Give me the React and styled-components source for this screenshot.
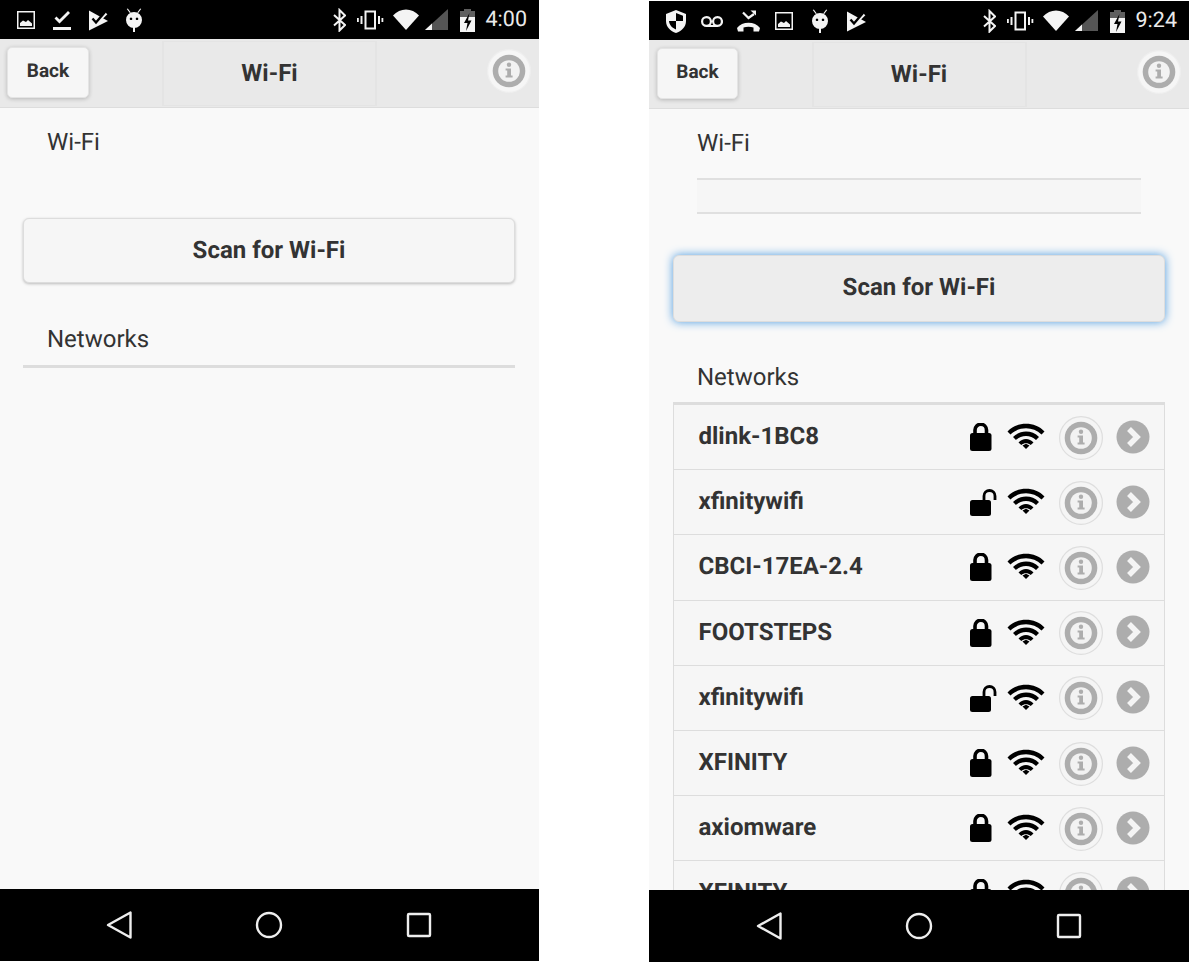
import React from "react";
import styled, { createGlobalStyle, css } from "styled-components";

const Global = createGlobalStyle`
  html, body { margin: 0; padding: 0; background: #fff; }
  body {
    font-family: Roboto, "Liberation Sans", sans-serif;
    overflow: hidden;
    text-rendering: geometricPrecision;
  }
`;

const Page = styled.div`
  display: flex;
  gap: 110px;
  width: 1191px;
  height: 963px;
  align-items: flex-start;
`;
const Phone = styled.div`
  display: flex;
  flex-direction: column;
  flex: none;
  width: ${(p) => p.$w}px;
  height: 961px;
  margin-top: ${(p) => p.$top}px;
  background: #f9f9f9;
`;
const StatusBar = styled.div`
  flex: none;
  height: 39px;
  background: #000;
  display: flex;
  align-items: center;
  color: #eee;
`;
const StatusIcon = styled.svg`
  flex: none;
  margin-left: ${(p) => p.$ml}px;
  width: ${(p) => p.$w}px;
  height: 24px;
  fill: #f4f4f4;
  stroke: none;
`;
const Spacer = styled.div`
  flex: 1;
`;
const Clock = styled.span`
  font-size: 21.5px;
  margin-left: 11px;
  margin-right: 12px;
  color: #eaeaea;
`;
const Header = styled.header`
  flex: none;
  height: 69px;
  box-sizing: border-box;
  position: relative;
  display: flex;
  justify-content: center;
  background: #e9e9e9;
  border-bottom: 1px solid #ddd;
`;
const BackButton = styled.div`
  position: absolute;
  left: ${(p) => p.$left}px;
  top: 8px;
  width: ${(p) => p.$w}px;
  height: 51px;
  padding-bottom: 4px;
  display: flex;
  align-items: center;
  justify-content: center;
  background: #f6f6f6;
  border: 1px solid #e4e4e4;
  border-radius: 5px;
  box-sizing: border-box;
  box-shadow: 0 1px 4px rgba(0, 0, 0, 0.22);
  font-size: 19px;
  font-weight: 700;
  color: #333;
`;
const Title = styled.h1`
  margin: 2px 0 1px;
  padding-bottom: 2px;
  width: 215px;
  box-sizing: border-box;
  border: 2px solid #e4e4e4;
  border-width: 1px 2px;
  display: flex;
  align-items: center;
  justify-content: center;
  font-size: 24px;
  font-weight: 700;
  color: #333;
`;
const HeaderInfo = styled.div`
  position: absolute;
  right: 8px;
  top: 10px;
`;
const Content = styled.main`
  flex: 1;
  min-height: 0;
  overflow: hidden;
  padding: 0 24px 0 ${(p) => p.$pl}px;
  display: flex;
  flex-direction: column;
`;
const FieldLabel = styled.div`
  font-size: 24px;
  line-height: 28px;
  color: #333;
  padding-left: 24px;
  margin-top: ${(p) => p.$mt}px;
`;
const TextField = styled.div`
  flex: none;
  margin: 21px 0 0 24px;
  width: 444px;
  height: 36px;
  box-sizing: border-box;
  background: #f6f6f6;
  border-top: 2px solid #e0e0e0;
  border-bottom: 2px solid #e0e0e0;
`;
const ScanButton = styled.div`
  flex: none;
  height: ${(p) => (p.$focus ? 67 : 65)}px;
  margin-top: ${(p) => p.$mt}px;
  padding-bottom: ${(p) => (p.$focus ? 4 : 2)}px;
  box-sizing: border-box;
  display: flex;
  align-items: center;
  justify-content: center;
  border: 1px solid #ddd;
  border-radius: 6px;
  font-size: 24px;
  font-weight: 700;
  color: #333;
  ${(p) =>
    p.$focus
      ? css`
          background: #ededed;
          box-shadow: 0 0 10px #4c9be0;
        `
      : css`
          background: #f6f6f6;
          box-shadow: 0 1px 3px rgba(0, 0, 0, 0.25);
        `}
`;
const Rule = styled.div`
  flex: none;
  height: 3px;
  margin-top: 12px;
  background: #ddd;
`;
const List = styled.ul`
  list-style: none;
  margin: 11px 0 0;
  padding: 0;
  border-top: 3px solid #ddd;
  border-left: 1px solid #ddd;
  border-right: 1px solid #ddd;
  flex: none;
`;
const Row = styled.li`
  height: 65.2px;
  box-sizing: border-box;
  border-bottom: 1px solid #ddd;
  background: #f6f6f6;
  display: flex;
  align-items: center;
  padding: 0 14px 2px 24.5px;
`;
const Name = styled.span`
  flex: 1;
  font-size: 24px;
  font-weight: 700;
  color: #333;
`;
const LockBox = styled.svg`
  flex: none;
  width: 28px;
  height: 30px;
  margin-right: 9px;
  margin-top: 4px;
`;
const WifiBox = styled.svg`
  flex: none;
  width: 38px;
  height: 28px;
  margin-right: 14px;
`;
const RowInfo = styled.div`
  flex: none;
  display: flex;
  margin-top: 3px;
`;
const Chevron = styled.svg`
  flex: none;
  width: 34px;
  height: 34px;
  margin-left: 13px;
  margin-top: 1px;
`;
const NavBar = styled.nav`
  flex: none;
  height: 72px;
  padding-right: ${(p) => p.$pr}px;
  background: #000;
  display: flex;
  align-items: center;
  justify-content: center;
  gap: 114px;
`;
const NavIcon = styled.svg`
  width: 36px;
  height: 36px;
  fill: none;
  stroke: #eee;
  stroke-width: 2.4;
  stroke-linejoin: round;
`;

const InfoCircle = styled.svg`
  display: block;
  width: 44px;
  height: 44px;
`;

const Info = ({ halo }) => (
  <InfoCircle viewBox="0 0 44 44">
    <circle cx="22" cy="22" r="21.4" fill={halo ? "#f5f5f5" : "#f6f6f6"} stroke={halo ? "#dedede" : "#eeeeee"} strokeWidth="1.2" />
    <circle cx="22" cy="22" r="16.3" fill="#adadad" />
    <circle cx="22" cy="22" r="10.8" fill="#f2f2f2" />
    <circle cx="22" cy="15.8" r="2.2" fill="#adadad" />
    <path d="M18.6 19.4h5.4v7.2h1.6v2h-7v-2h1.6v-5.2h-1.6z" fill="#adadad" />
  </InfoCircle>
);

const Lock = ({ open }) =>
  open ? (
    <LockBox viewBox="0 0 28 30">
      <rect x="0" y="12" width="21" height="16" rx="2.5" fill="#000" />
      <path d="M14 13V8a5.5 5.5 0 0 1 11 0v4" fill="none" stroke="#000" strokeWidth="2.8" />
    </LockBox>
  ) : (
    <LockBox viewBox="0 0 28 30">
      <rect x="0" y="10" width="21.500" height="18" rx="2.5" fill="#000" />
      <path d="M5 12V7a5.750 5.750 0 0 1 11.500 0V12" fill="none" stroke="#000" strokeWidth="3.6" />
    </LockBox>
  );

const Wifi = () => (
  <WifiBox viewBox="0 0 38 28" fill="#000">
    <path d="M0.500 9.500C10-.8 28-.8 37.500 9.500L34.500 12.500C26 4.200 12 4.200 3.500 12.500z" />
    <path d="M6 15C13 7.800 25 7.800 32 15L29 18C23.500 12.500 14.500 12.500 9 18z" />
    <path d="M11.500 20.500C15.500 15.800 22.500 15.800 26.500 20.500L23.700 23C21 20.500 17 20.500 14.300 23z" />
    <path d="M15.500 23.500l3.500-1.800 3.500 1.800-3.500 3.500z" />
  </WifiBox>
);

const Arrow = () => (
  <Chevron viewBox="0 0 34 34">
    <circle cx="17" cy="17" r="16.5" fill="#adadad" />
    <path d="M13 9L21 17L13 25" fill="none" stroke="#f4f4f4" strokeWidth="5.5" />
  </Chevron>
);

const icons = {
  image: (
    <>
      <path fillRule="evenodd" d="M0 3h18v18H0zM1.500 4.500v15h15v-15z" />
      <path d="M3 18v-3l3-2.500 3 1.500 2-2 4 3.500V18z" />
    </>
  ),
  check: (
    <>
      <path d="M0 19h18v3H0z" />
      <path d="M1.500 10.500l2-2 3 3L15 3l2 2L6.500 15.500z" />
    </>
  ),
  play: (
    <>
      <path d="M0 2.500L19 13 0 22.500z" />
      <path d="M9.500 13.500L17.500 5.500" fill="none" stroke="#f4f4f4" strokeWidth="2.400" />
      <path d="M3.500 10.500L7 14.500L15.500 4.500" fill="none" stroke="#000" strokeWidth="2.400" />
    </>
  ),
  android: (
    <>
      <path fillRule="evenodd" d="M8 4a8 8 0 0 1 8 8 8 8 0 0 1-16 0 8 8 0 0 1 8-8zM5 9.500a1.300 1.300 0 1 0 .01 0zM11 9.500a1.300 1.300 0 1 0 .01 0z" />
      <path d="M7 19h2v6H7zM1.800 .5l3 4-1 .6-3-4zM14.200 .5l-3 4 1 .6 3-4z" />
    </>
  ),
  shield: (
    <path fillRule="evenodd" d="M10 1l10 4v7c0 6-4.500 10-10 12C4.500 22 0 18 0 12V5zM10 4v8H3c.3 4 3.300 7 7 8.500V12h7V6.800z" />
  ),
  voicemail: (
    <path fillRule="evenodd" d="M5.500 7a5.500 5.500 0 0 1 4.200 9h2.600a5.500 5.500 0 1 1 4.200 2h-11a5.500 5.500 0 0 1 0-11zM5.500 9.200a3.300 3.300 0 1 0 0 6.600 3.300 3.300 0 0 0 0-6.600zM16.500 9.200a3.300 3.300 0 1 0 0 6.600 3.300 3.300 0 0 0 0-6.600z" />
  ),
  missed: (
    <>
      <path d="M0 19c5-7 18-7 23 0l-1 3.500h-5.500v-4c-3-1-7-1-10 0v4H1z" />
      <path d="M6 3.500l5.500 5.500 5.500-4" fill="none" stroke="#f4f4f4" strokeWidth="2.200" />
      <path d="M13.500 1.500H19v5z" />
    </>
  ),
  bluetooth: (
    <path fill="none" stroke="#f4f4f4" strokeWidth="2" d="M1 7l11 10-5.500 5.500V2L12 7.500 1 17.500" />
  ),
  vibrate: (
    <>
      <path fillRule="evenodd" d="M7.500 2.500h11.500v19H7.500zM9.500 4.500v15h7.500v-15z" />
      <path d="M3.500 8h2v8h-2zM0 10h1.800v4H0zM21 8h2v8h-2zM24.500 10h1.800v4h-1.800z" />
    </>
  ),
  wifi: <path d="M0 7.500C7-.5 19-.5 26 7.500L13 22z" />,
  signal: (
    <>
      <path d="M23 1v21H0z" fill="#555" />
      <path d="M7 15.600V22H0z" />
    </>
  ),
  battery: (
    <>
      <path d="M4 1h7v2h4v21H0V3h4z" fill="#5f5f5f" />
      <path d="M0 9h15v15H0z" />
      <path d="M9.500 5L4 15h3.500l-1.500 8L11.500 12.500H8z" fill="#000" />
    </>
  ),
};

const S = ({ name, w, ml, vb }) => (
  <StatusIcon $w={w} $ml={ml} viewBox={vb || `0 0 ${w} 24`}>
    {icons[name]}
  </StatusIcon>
);

const nets = [
  ["dlink-1BC8", false],
  ["xfinitywifi", true],
  ["CBCI-17EA-2.4", false],
  ["FOOTSTEPS", false],
  ["xfinitywifi", true],
  ["XFINITY", false],
  ["axiomware", false],
  ["XFINITY", false],
];

const Chrome = ({ w, top, left, backW, backLeft, time, children, pl, navPr }) => (
  <Phone $w={w} $top={top}>
    <StatusBar>
      {left}
      <Spacer />
      <S name="bluetooth" w={13} ml={0} vb="0 0 13 24" />
      <S name="vibrate" w={27} ml={11} />
      <S name="wifi" w={26} ml={9} />
      <S name="signal" w={23} ml={6} />
      <S name="battery" w={15} ml={12} />
      <Clock>{time}</Clock>
    </StatusBar>
    <Header>
      <BackButton $left={backLeft} $w={backW}>Back</BackButton>
      <Title>Wi-Fi</Title>
      <HeaderInfo>
        <Info />
      </HeaderInfo>
    </Header>
    <Content $pl={pl}>{children}</Content>
    <NavBar $pr={navPr}>
      <NavIcon viewBox="0 0 36 36">
        <path d="M29.500 5.500v25L7 18z" />
      </NavIcon>
      <NavIcon viewBox="0 0 36 36">
        <circle cx="18" cy="18" r="12" />
      </NavIcon>
      <NavIcon viewBox="0 0 36 36">
        <rect x="7" y="7" width="22" height="22" rx="1" />
      </NavIcon>
    </NavBar>
  </Phone>
);

export default function App() {
  return (
    <>
      <Global />
      <Page>
        <Chrome
          w={539}
          top={0}
          backW={82}
          backLeft={7}
          pl={23}
          navPr={1}
          time="4:00"
          left={
            <>
              <S name="image" w={18} ml={17} />
              <S name="check" w={18} ml={18} />
              <S name="play" w={19} ml={18} />
              <S name="android" w={16} ml={18} />
            </>
          }
        >
          <FieldLabel $mt={20}>Wi-Fi</FieldLabel>
          <ScanButton $mt={62}>Scan for Wi-Fi</ScanButton>
          <FieldLabel $mt={42}>Networks</FieldLabel>
          <Rule />
        </Chrome>
        <Chrome
          w={540}
          top={1}
          backW={81}
          backLeft={8}
          pl={24}
          navPr={0}
          time="9:24"
          left={
            <>
              <S name="shield" w={20} ml={17} />
              <S name="voicemail" w={22} ml={15} />
              <S name="missed" w={23} ml={14} />
              <S name="image" w={18} ml={15} />
              <S name="android" w={16} ml={19} />
              <S name="play" w={19} ml={19} />
            </>
          }
        >
          <FieldLabel $mt={20}>Wi-Fi</FieldLabel>
          <TextField />
          <ScanButton $focus $mt={41}>Scan for Wi-Fi</ScanButton>
          <FieldLabel $mt={41}>Networks</FieldLabel>
          <List>
            {nets.map(([n, open], i) => (
              <Row key={i}>
                <Name>{n}</Name>
                <Lock open={open} />
                <Wifi />
                <RowInfo>
                  <Info halo />
                </RowInfo>
                <Arrow />
              </Row>
            ))}
          </List>
        </Chrome>
      </Page>
    </>
  );
}
